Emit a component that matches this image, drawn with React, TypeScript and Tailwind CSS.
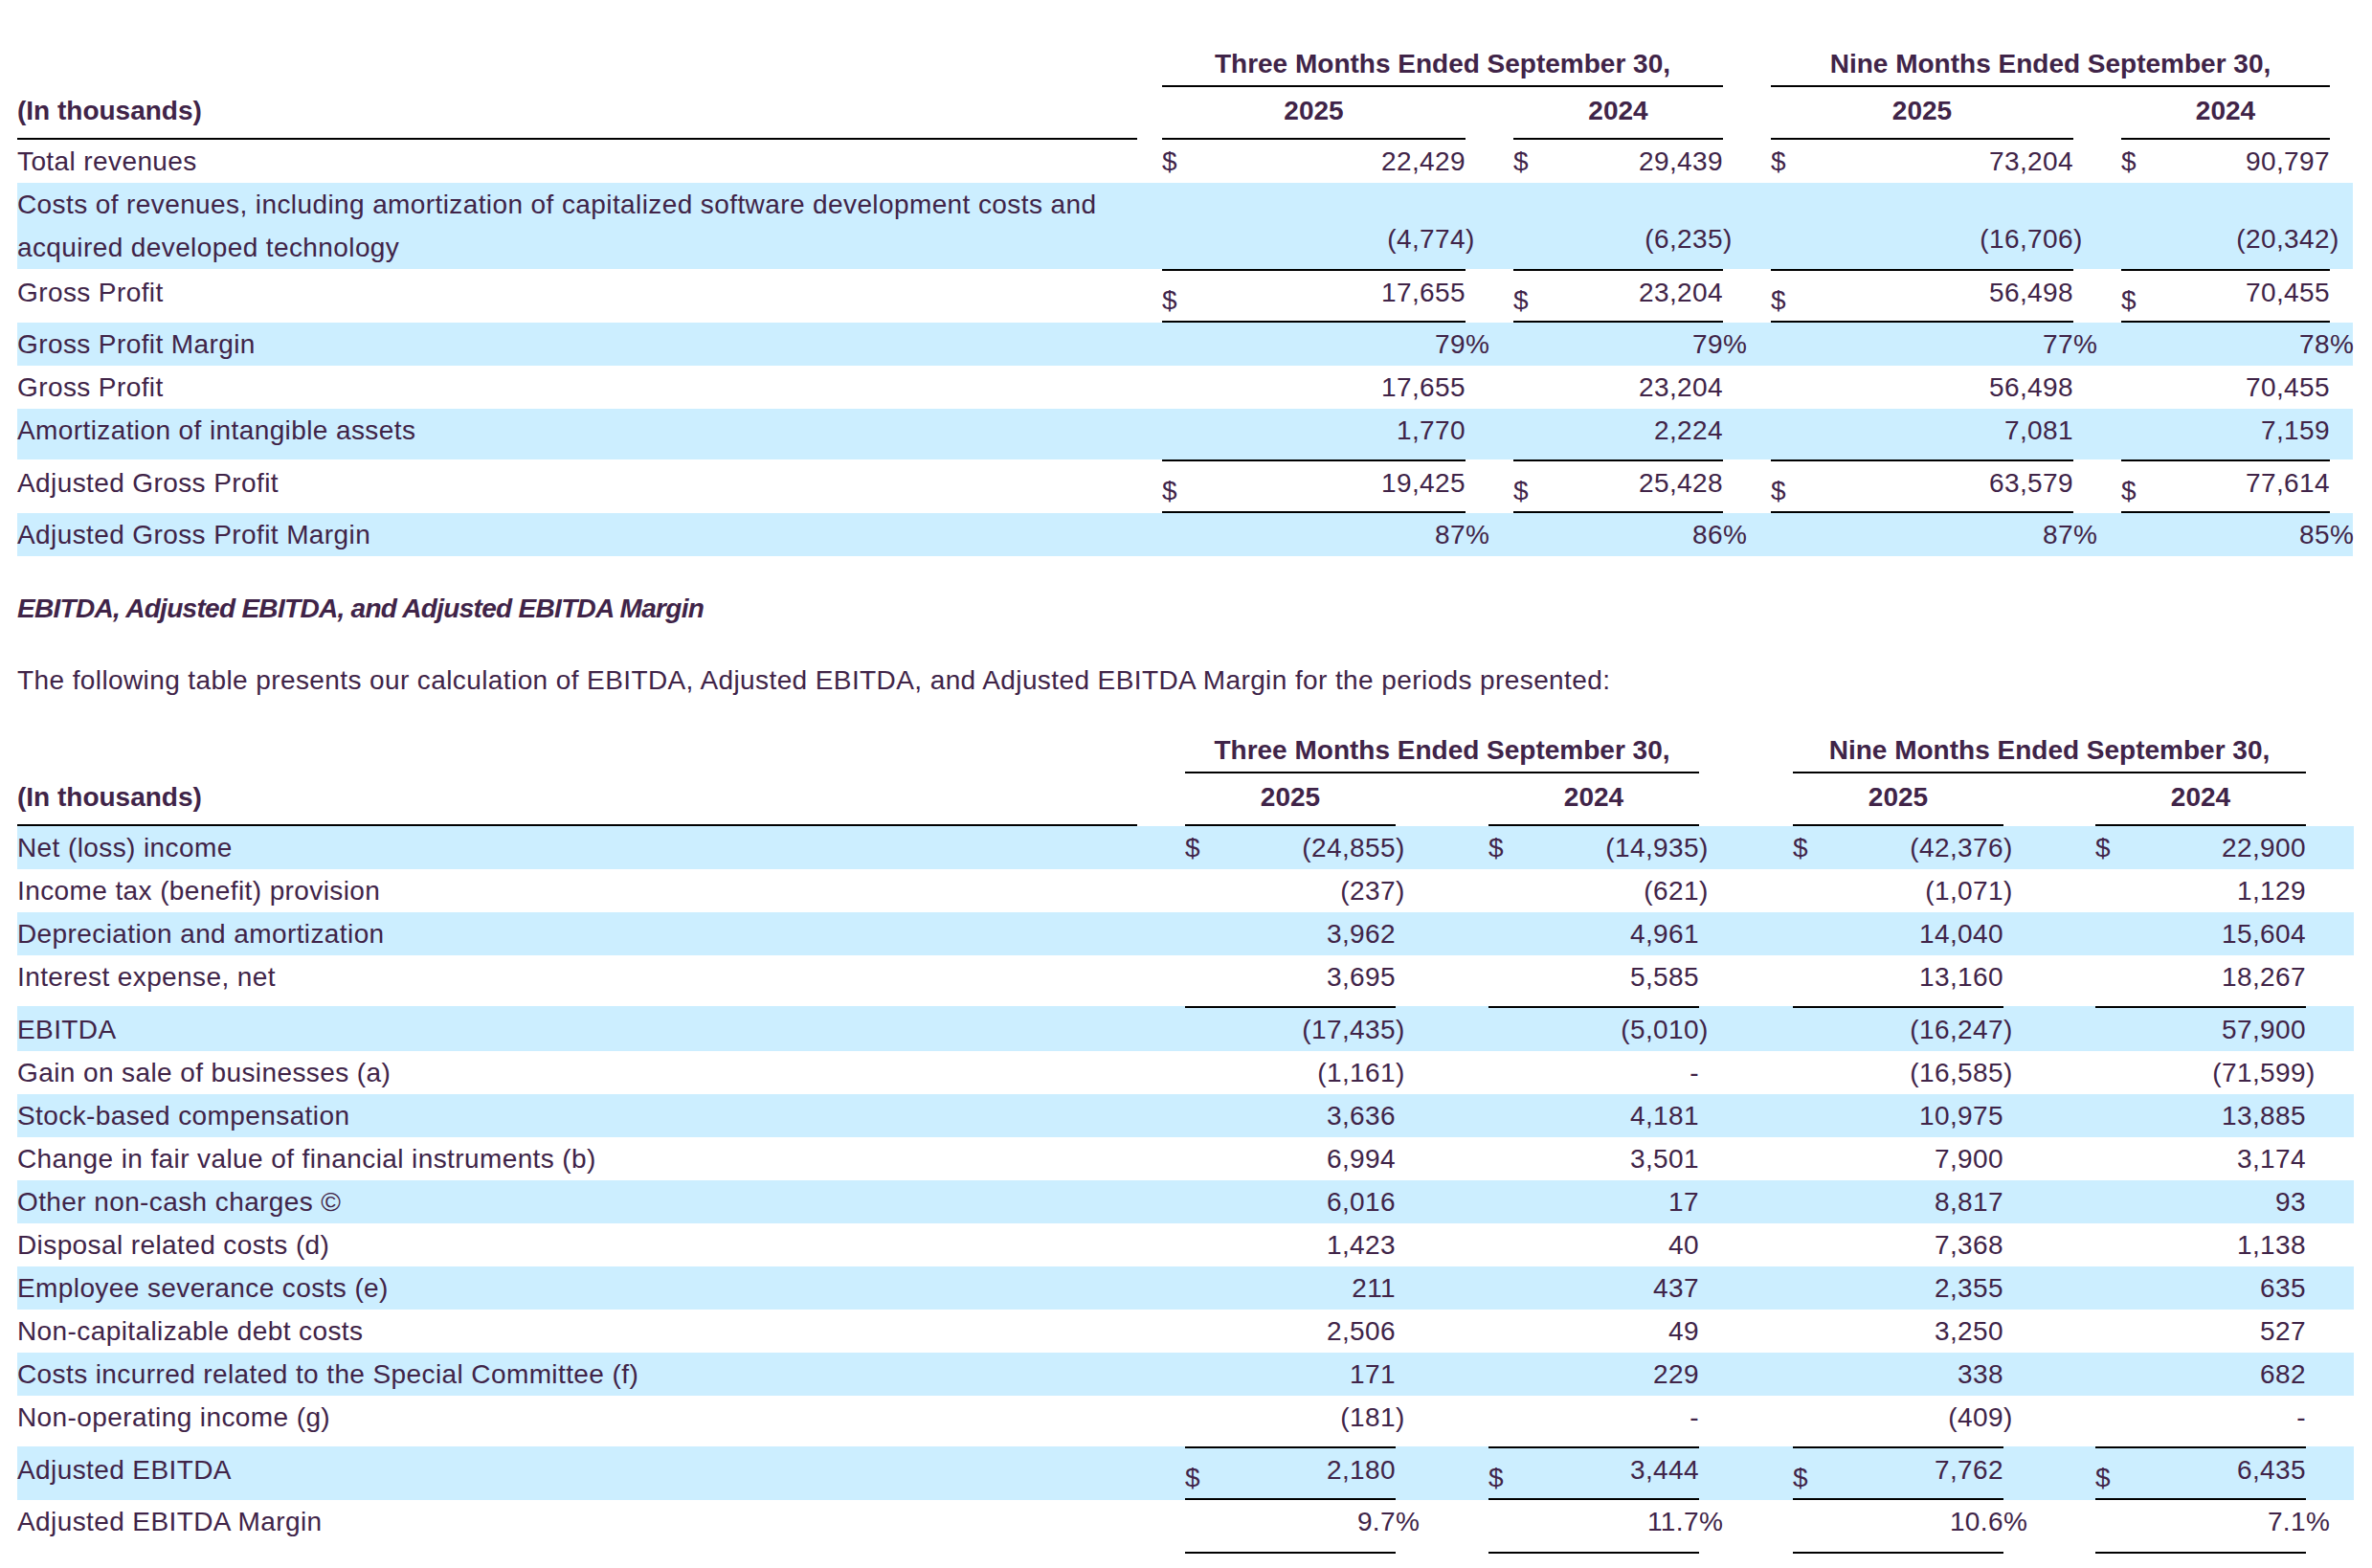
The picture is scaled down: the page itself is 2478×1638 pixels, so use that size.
import clsx from 'clsx';

type Kind = 'plain' | 'pad' | 'total' | 'sub' | 'wrap' | 'last';

type Line = {
  label: string;
  vals: string[];
  kind?: Kind;
  dollar?: boolean;
  band?: boolean;
};

type Layout = {
  gap: string;
  cols: string[];
  sufs: string[];
  g1: string;
  g2: string;
  mid: string;
  end: string;
};

// column widths measured off the screenshot
const first: Layout = {
  gap: 'w-[26px]',
  cols: ['w-[317px]', 'w-[219px]', 'w-[316px]', 'w-[218px]'],
  sufs: ['w-[50px]', 'w-[50px]', 'w-[50px]', 'w-[24px]'],
  g1: 'w-[586px]',
  g2: 'w-[584px]',
  mid: 'w-[50px]',
  end: 'w-[24px]',
};

const second: Layout = {
  gap: 'w-[50px]',
  cols: ['w-[220px]', 'w-[220px]', 'w-[220px]', 'w-[220px]'],
  sufs: ['w-[97px]', 'w-[98px]', 'w-[96px]', 'w-[50px]'],
  g1: 'w-[537px]',
  g2: 'w-[536px]',
  mid: 'w-[98px]',
  end: 'w-[50px]',
};

const grossRows: Line[] = [
  { label: 'Total revenues', vals: ['22,429', '29,439', '73,204', '90,797'], dollar: true },
  {
    label: 'Costs of revenues, including amortization of capitalized software development costs and acquired developed technology',
    vals: ['(4,774)', '(6,235)', '(16,706)', '(20,342)'],
    kind: 'wrap',
    band: true,
  },
  { label: 'Gross Profit', vals: ['17,655', '23,204', '56,498', '70,455'], kind: 'total', dollar: true },
  { label: 'Gross Profit Margin', vals: ['79%', '79%', '77%', '78%'], band: true },
  { label: 'Gross Profit', vals: ['17,655', '23,204', '56,498', '70,455'] },
  { label: 'Amortization of intangible assets', vals: ['1,770', '2,224', '7,081', '7,159'], kind: 'pad', band: true },
  { label: 'Adjusted Gross Profit', vals: ['19,425', '25,428', '63,579', '77,614'], kind: 'total', dollar: true },
  { label: 'Adjusted Gross Profit Margin', vals: ['87%', '86%', '87%', '85%'], band: true },
];

const ebitdaRows: Line[] = [
  { label: 'Net (loss) income', vals: ['(24,855)', '(14,935)', '(42,376)', '22,900'], dollar: true, band: true },
  { label: 'Income tax (benefit) provision', vals: ['(237)', '(621)', '(1,071)', '1,129'] },
  { label: 'Depreciation and amortization', vals: ['3,962', '4,961', '14,040', '15,604'], band: true },
  { label: 'Interest expense, net', vals: ['3,695', '5,585', '13,160', '18,267'], kind: 'pad' },
  { label: 'EBITDA', vals: ['(17,435)', '(5,010)', '(16,247)', '57,900'], kind: 'sub', band: true },
  { label: 'Gain on sale of businesses (a)', vals: ['(1,161)', '-', '(16,585)', '(71,599)'] },
  { label: 'Stock-based compensation', vals: ['3,636', '4,181', '10,975', '13,885'], band: true },
  { label: 'Change in fair value of financial instruments (b)', vals: ['6,994', '3,501', '7,900', '3,174'] },
  { label: 'Other non-cash charges ©', vals: ['6,016', '17', '8,817', '93'], band: true },
  { label: 'Disposal related costs (d)', vals: ['1,423', '40', '7,368', '1,138'] },
  { label: 'Employee severance costs (e)', vals: ['211', '437', '2,355', '635'], band: true },
  { label: 'Non-capitalizable debt costs', vals: ['2,506', '49', '3,250', '527'] },
  { label: 'Costs incurred related to the Special Committee (f)', vals: ['171', '229', '338', '682'], band: true },
  { label: 'Non-operating income (g)', vals: ['(181)', '-', '(409)', '-'], kind: 'pad' },
  { label: 'Adjusted EBITDA', vals: ['2,180', '3,444', '7,762', '6,435'], kind: 'total', dollar: true, band: true },
  { label: 'Adjusted EBITDA Margin', vals: ['9.7%', '11.7%', '10.6%', '7.1%'], kind: 'last' },
];

function split(v: string): [string, string] {
  if (v.endsWith(')')) return [v.slice(0, -1), ')'];
  if (v.endsWith('%')) return [v.slice(0, -1), '%'];
  return [v, ''];
}

function Header({ lay }: { lay: Layout }) {
  return (
    <div className="font-bold tracking-normal">
      <div className="flex h-[47px]">
        <div className="w-[1170px]" />
        <div className={lay.gap} />
        <div className={clsx(lay.g1, 'border-b-2 border-black text-center')}>Three Months Ended September 30,</div>
        <div className={lay.mid} />
        <div className={clsx(lay.g2, 'border-b-2 border-black text-center')}>Nine Months Ended September 30,</div>
        <div className={lay.end} />
      </div>
      <div className="flex h-[55px]">
        <div className="w-[1170px] border-b-2 border-black pt-[2px]">(In thousands)</div>
        <div className={lay.gap} />
        {['2025', '2024', '2025', '2024'].map((y, i) => (
          <div key={i} className="flex">
            <div className={clsx(lay.cols[i], 'border-b-2 border-black pt-[2px] text-center')}>{y}</div>
            <div className={lay.sufs[i]} />
          </div>
        ))}
      </div>
    </div>
  );
}

function Row({ row, lay }: { row: Line; lay: Layout }) {
  const kind = row.kind ?? 'plain';
  return (
    <div
      className={clsx(
        'flex',
        row.band && 'bg-[#cceeff]',
        kind === 'plain' && 'h-[45px]',
        kind === 'pad' && 'h-[53px]',
        kind === 'total' && 'h-[56px]',
        kind === 'sub' && 'h-[47px]',
        kind === 'wrap' && 'h-[90px]',
        kind === 'last' && 'h-[56px]',
      )}
    >
      <div className={clsx('w-[1170px]', (kind === 'total' || kind === 'sub') && 'pt-[2px]')}>{row.label}</div>
      <div className={lay.gap} />
      {row.vals.map((v, i) => {
        const [num, suf] = split(v);
        return (
          <div key={i} className="flex">
            <div
              className={clsx(
                lay.cols[i],
                'flex justify-between border-black',
                kind === 'total' && 'border-y-2',
                kind === 'sub' && 'border-t-2',
                kind === 'last' && 'border-b-2',
                kind === 'wrap' && 'pt-[36px]',
              )}
            >
              <span className={clsx(kind === 'total' && 'pt-[8px]')}>{row.dollar ? '$' : ''}</span>
              <span className="tracking-[0.4px]">{num}</span>
            </div>
            <div className={clsx(lay.sufs[i], kind === 'wrap' && 'pt-[36px]', (kind === 'total' || kind === 'sub') && 'pt-[2px]')}>
              {suf}
            </div>
          </div>
        );
      })}
    </div>
  );
}

export default function App() {
  return (
    <div className="min-h-screen bg-white pl-[18px] pt-[44px] font-['Liberation_Sans',Arial,sans-serif] text-[28px] leading-[45px] tracking-[0.4px] text-[#402448]">
      <div className="w-[2440px]">
        <Header lay={first} />
        {grossRows.map((r, i) => (
          <Row key={i} row={r} lay={first} />
        ))}
      </div>

      <h3 className="mt-[32px] text-[28px] font-bold italic tracking-[-0.7px]">
        EBITDA, Adjusted EBITDA, and Adjusted EBITDA Margin
      </h3>
      <p className="mt-[30px]">
        The following table presents our calculation of EBITDA, Adjusted EBITDA, and Adjusted EBITDA Margin for the periods presented:
      </p>

      <div className="mt-[28px] w-[2441px]">
        <Header lay={second} />
        {ebitdaRows.map((r, i) => (
          <Row key={i} row={r} lay={second} />
        ))}
      </div>
    </div>
  );
}
